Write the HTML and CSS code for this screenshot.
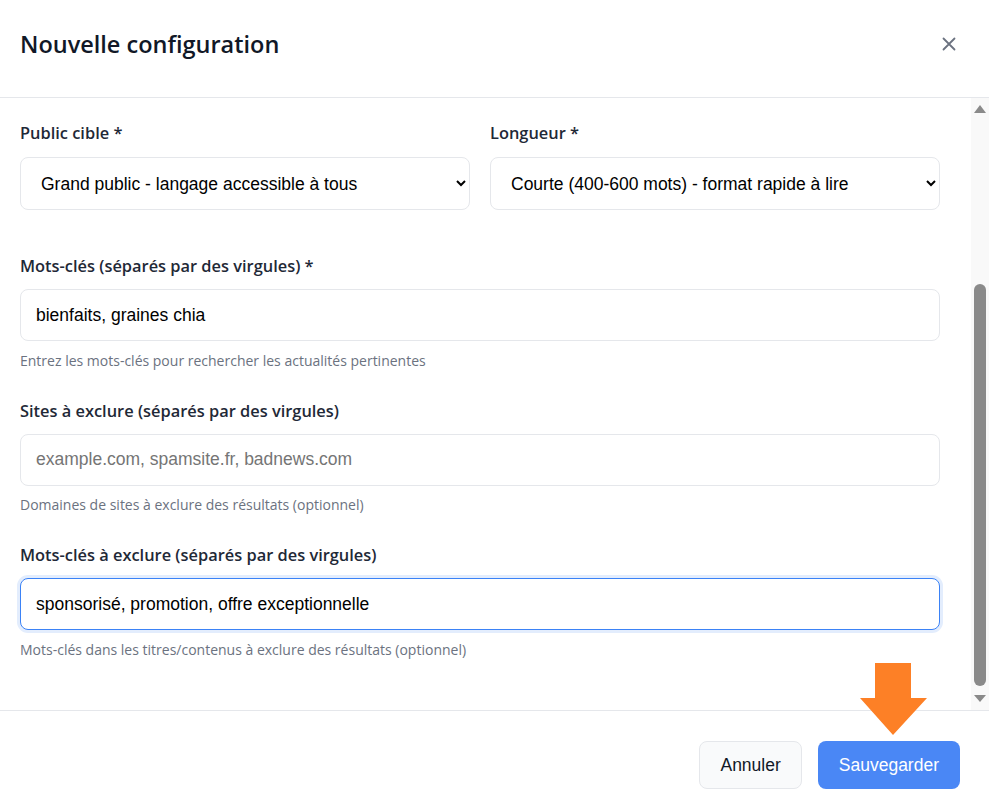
FILE: index.html
```html
<!DOCTYPE html>
<html lang="fr">
  <head>
    <meta charset="utf-8">
    <title>Nouvelle configuration</title>
    <link rel="stylesheet" href="styles.css">
  </head>
  <body>
    <div class="modal">
      <div class="modal-header">
        <h2 class="modal-title">Nouvelle configuration</h2>
        <button class="close-btn" aria-label="Fermer">
          <svg width="14" height="14" viewBox="0 0 14 14"><path d="M1.5 1.5 L12.5 12.5 M12.5 1.5 L1.5 12.5" stroke="#6b7280" stroke-width="1.8" stroke-linecap="round"/></svg>
        </button>
      </div>

      <div class="modal-body">
        <div class="row">
          <div class="field">
            <label class="label" for="audience">Public cible *</label>
            <select id="audience" class="control">
              <option>Grand public - langage accessible à tous</option>
            </select>
          </div>
          <div class="field">
            <label class="label" for="length">Longueur *</label>
            <select id="length" class="control">
              <option>Courte (400-600 mots) - format rapide à lire</option>
            </select>
          </div>
        </div>

        <div class="group">
          <label class="label" for="keywords">Mots-clés (séparés par des virgules) *</label>
          <input id="keywords" class="control" type="text" value="bienfaits, graines chia">
          <p class="help">Entrez les mots-clés pour rechercher les actualités pertinentes</p>
        </div>

        <div class="group">
          <label class="label" for="sites">Sites à exclure (séparés par des virgules)</label>
          <input id="sites" class="control" type="text" placeholder="example.com, spamsite.fr, badnews.com">
          <p class="help">Domaines de sites à exclure des résultats (optionnel)</p>
        </div>

        <div class="group">
          <label class="label" for="exclude">Mots-clés à exclure (séparés par des virgules)</label>
          <input id="exclude" class="control is-focused" type="text" value="sponsorisé, promotion, offre exceptionnelle">
          <p class="help">Mots-clés dans les titres/contenus à exclure des résultats (optionnel)</p>
        </div>

        <!-- scroll position of the modal body -->
        <div class="scrollbar">
          <svg width="18" height="612" viewBox="0 0 18 612">
            <polygon points="3,15 15,15 9,7" fill="#8a8a8a"/>
            <rect x="3" y="186" width="12" height="402" rx="6" fill="#8a8a8a"/>
            <polygon points="3,597 15,597 9,604" fill="#8a8a8a"/>
          </svg>
        </div>
      </div>

      <div class="modal-footer">
        <button class="btn btn-light">Annuler</button>
        <button class="btn btn-primary">Sauvegarder</button>
      </div>

      <svg class="pointer" width="70" height="75" viewBox="0 0 70 75">
        <polygon points="15,0 51,0 51,35 67,35 33,72 0,35 15,35" fill="#fd8026"/>
      </svg>
    </div>
  </body>
</html>
```

FILE: styles.css
```css
* {
  box-sizing: border-box;
}
html, body {
  margin: 0;
  height: 100%;
}
body {
  background: #fff;
  font-family: "Open Sans", "Noto Sans", sans-serif;
  color: #1f2937;
}
.modal {
  position: relative;
  height: 810px;
  display: flex;
  flex-direction: column;
}
.modal-header {
  height: 98px;
  flex: none;
  display: flex;
  align-items: center;
  justify-content: space-between;
  padding: 0 28px 9px 20px;
  border-bottom: 1px solid #e5e7eb;
}
.modal-title {
  margin: 0;
  font-size: 23.5px;
  font-weight: 600;
  line-height: 32px;
  color: #111827;
}
.close-btn {
  width: 24px;
  height: 24px;
  padding: 0;
  border: 0;
  background: none;
  display: flex;
  align-items: center;
  justify-content: center;
}
.modal-body {
  position: relative;
  height: 612px;
  flex: none;
  overflow: hidden;
  padding: 23px 49px 0 20px;
}
.row {
  display: grid;
  grid-template-columns: 1fr 1fr;
  column-gap: 20px;
  margin-bottom: 44px;
}
.label {
  display: block;
  font-size: 16.4px;
  font-weight: 600;
  line-height: 24px;
  margin-bottom: 12px;
}
.group .label {
  margin-bottom: 11px;
}
.control {
  display: block;
  width: 100%;
  height: 53px;
  border: 1px solid #e5e7eb;
  border-radius: 8px;
  background: #fff;
  font-family: "Liberation Sans", Arial, sans-serif;
  font-size: 17.5px;
  color: #000;
  padding: 0 10px 0 15px;
}
select.control {
  padding-left: 16px;
}
input.control {
  height: 52px;
}
input.control::placeholder {
  color: #757575;
}
.control.is-focused {
  border-color: #3b82f6;
  box-shadow: 0 0 0 3px #e3edfd;
  outline: none;
}
.group {
  margin-bottom: 28px;
}
.help {
  margin: 9.5px 0 0;
  font-size: 14px;
  line-height: 20px;
  color: #6b7280;
}
.scrollbar {
  position: absolute;
  top: 0;
  right: 0;
  width: 18px;
  height: 612px;
  background: #f9f9f9;
}
.scrollbar svg {
  display: block;
}
.modal-footer {
  flex: 1;
  display: flex;
  justify-content: flex-end;
  align-items: flex-start;
  gap: 16px;
  padding: 30px 29px 0;
  border-top: 1px solid #e5e7eb;
}
.btn {
  height: 48px;
  padding: 0 20px;
  border-radius: 8px;
  border: 1px solid transparent;
  font-family: "Liberation Sans", Arial, sans-serif;
  font-size: 17.5px;
}
.btn-light {
  background: #f9fafb;
  border-color: #e5e7eb;
  color: #111827;
}
.btn-primary {
  background: #4a87f5;
  color: #fff;
}
.pointer {
  position: absolute;
  left: 860px;
  top: 663px;
}
```
